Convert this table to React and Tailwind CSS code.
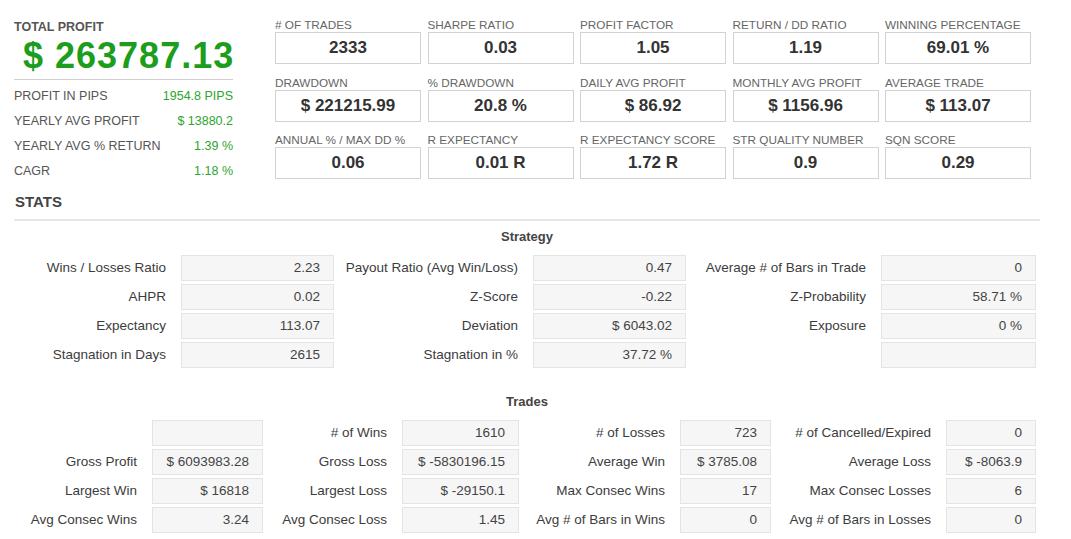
import React from 'react';

const summary = [
  { label: 'PROFIT IN PIPS', value: '1954.8 PIPS' },
  { label: 'YEARLY AVG PROFIT', value: '$ 13880.2' },
  { label: 'YEARLY AVG % RETURN', value: '1.39 %' },
  { label: 'CAGR', value: '1.18 %' },
];

const metrics = [
  ['# OF TRADES', '2333'],
  ['SHARPE RATIO', '0.03'],
  ['PROFIT FACTOR', '1.05'],
  ['RETURN / DD RATIO', '1.19'],
  ['WINNING PERCENTAGE', '69.01 %'],
  ['DRAWDOWN', '$ 221215.99'],
  ['% DRAWDOWN', '20.8 %'],
  ['DAILY AVG PROFIT', '$ 86.92'],
  ['MONTHLY AVG PROFIT', '$ 1156.96'],
  ['AVERAGE TRADE', '$ 113.07'],
  ['ANNUAL % / MAX DD %', '0.06'],
  ['R EXPECTANCY', '0.01 R'],
  ['R EXPECTANCY SCORE', '1.72 R'],
  ['STR QUALITY NUMBER', '0.9'],
  ['SQN SCORE', '0.29'],
];

const strategy = [
  ['Wins / Losses Ratio', '2.23', 'Payout Ratio (Avg Win/Loss)', '0.47', 'Average # of Bars in Trade', '0'],
  ['AHPR', '0.02', 'Z-Score', '-0.22', 'Z-Probability', '58.71 %'],
  ['Expectancy', '113.07', 'Deviation', '$ 6043.02', 'Exposure', '0 %'],
  ['Stagnation in Days', '2615', 'Stagnation in %', '37.72 %', '', ''],
];

const trades = [
  ['', '', '# of Wins', '1610', '# of Losses', '723', '# of Cancelled/Expired', '0'],
  ['Gross Profit', '$ 6093983.28', 'Gross Loss', '$ -5830196.15', 'Average Win', '$ 3785.08', 'Average Loss', '$ -8063.9'],
  ['Largest Win', '$ 16818', 'Largest Loss', '$ -29150.1', 'Max Consec Wins', '17', 'Max Consec Losses', '6'],
  ['Avg Consec Wins', '3.24', 'Avg Consec Loss', '1.45', 'Avg # of Bars in Wins', '0', 'Avg # of Bars in Losses', '0'],
];

const Cell = ({ value }) => (
  <div className="h-[26px] bg-[#f6f6f6] border border-[#e4e4e4] flex items-center justify-end pr-[13px] text-[13.5px] text-[#444]">
    {value}
  </div>
);

const Label = ({ text }) => (
  <div className="h-[26px] flex items-center justify-end pr-[15px] text-[13.5px] text-[#3c3c3c] whitespace-nowrap">
    {text}
  </div>
);

const App = () => {
  return (
    <div className="w-[1071px] h-[539px] bg-white overflow-hidden font-['Liberation_Sans',Arial,sans-serif]">
      <div className="flex items-start pl-[14px] pt-[18px]">
        <div className="w-[219px] pt-[2px]">
          <div className="text-[12.5px] leading-[15px] font-bold text-[#555]">TOTAL PROFIT</div>
          <div className="pl-[9px] pt-[1px] pb-[3px] border-b border-[#cfcfcf] text-[36px] leading-[40px] font-bold tracking-[1px] text-[#1d9d1d] whitespace-nowrap">
            $ 263787.13
          </div>
          <div className="mt-[4px]">
            {summary.map(s => (
              <div key={s.label} className="h-[25px] flex items-center justify-between text-[12.5px]">
                <span className="text-[#555]">{s.label}</span>
                <span className="text-[#2ea52e]">{s.value}</span>
              </div>
            ))}
          </div>
        </div>

        <div className="ml-[42px] grid grid-cols-[repeat(5,146px)] gap-x-[6.5px] gap-y-[11.5px]">
          {metrics.map(([label, value]) => (
            <div key={label}>
              <div className="h-[14px] text-[11.75px] leading-[14px] text-[#666] whitespace-nowrap">{label}</div>
              <div className="h-[32px] border border-[#d2d2d2] flex items-center justify-center text-[17px] font-bold text-[#333]">
                {value}
              </div>
            </div>
          ))}
        </div>
      </div>

      <div className="mt-[9px] pl-[15px] text-[15px] leading-[18px] font-bold text-[#444]">STATS</div>
      <div className="mt-[8px] ml-[14px] w-[1026px] h-[2px] bg-[#e6e6e6]" />

      <div className="mt-[8px] w-[1054px] text-center text-[13px] leading-[16px] font-bold text-[#444]">Strategy</div>
      <div className="mt-[10px] ml-[14px] grid grid-cols-[167px_153px_199px_153px_195px_155px] gap-y-[3px]">
        {strategy.map((row, i) => (
          <React.Fragment key={i}>
            <Label text={row[0]} />
            <Cell value={row[1]} />
            <Label text={row[2]} />
            <Cell value={row[3]} />
            <Label text={row[4]} />
            <Cell value={row[5]} />
          </React.Fragment>
        ))}
      </div>

      <div className="mt-[26px] w-[1054px] text-center text-[13px] leading-[16px] font-bold text-[#444]">Trades</div>
      <div className="mt-[10px] ml-[14px] grid grid-cols-[138px_111px_139px_117px_161px_91px_175px_90px] gap-y-[3px]">
        {trades.map((row, i) => (
          <React.Fragment key={i}>
            <Label text={row[0]} />
            <Cell value={row[1]} />
            <Label text={row[2]} />
            <Cell value={row[3]} />
            <Label text={row[4]} />
            <Cell value={row[5]} />
            <Label text={row[6]} />
            <Cell value={row[7]} />
          </React.Fragment>
        ))}
      </div>
    </div>
  );
};

export default App;
